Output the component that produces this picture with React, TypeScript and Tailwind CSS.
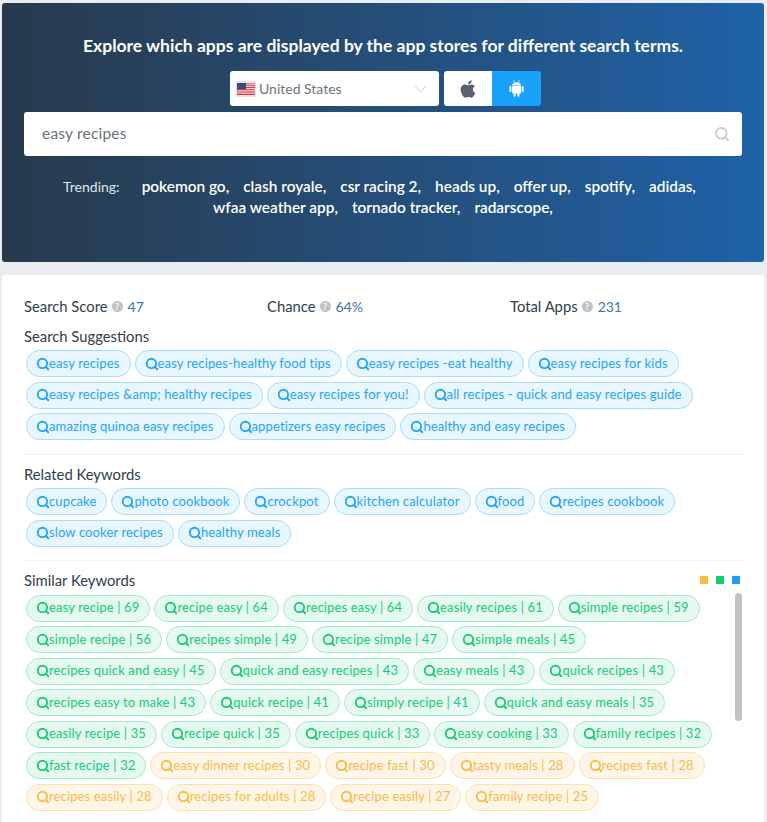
import { Search } from "lucide-react";
import { FaApple } from "react-icons/fa";

type Tone = "blue" | "green" | "orange";

const toneClass: Record<Tone, string> = {
  blue: "bg-[#e8f6ff] border-[#a6dcfd] text-[#1fa5fb]",
  green: "bg-[#e6f9f0] border-[#a3ebc6] text-[#14cd75]",
  orange: "bg-[#fff6e8] border-[#fde0ac] text-[#fdb94a]",
};

const suggestions = [
  "easy recipes",
  "easy recipes-healthy food tips",
  "easy recipes -eat healthy",
  "easy recipes for kids",
  "easy recipes &amp; healthy recipes",
  "easy recipes for you!",
  "all recipes - quick and easy recipes guide",
  "amazing quinoa easy recipes",
  "appetizers easy recipes",
  "healthy and easy recipes",
];

const related = [
  "cupcake",
  "photo cookbook",
  "crockpot",
  "kitchen calculator",
  "food",
  "recipes cookbook",
  "slow cooker recipes",
  "healthy meals",
];

const similar: [string, Tone][] = [
  ["easy recipe | 69", "green"],
  ["recipe easy | 64", "green"],
  ["recipes easy | 64", "green"],
  ["easily recipes | 61", "green"],
  ["simple recipes | 59", "green"],
  ["simple recipe | 56", "green"],
  ["recipes simple | 49", "green"],
  ["recipe simple | 47", "green"],
  ["simple meals | 45", "green"],
  ["recipes quick and easy | 45", "green"],
  ["quick and easy recipes | 43", "green"],
  ["easy meals | 43", "green"],
  ["quick recipes | 43", "green"],
  ["recipes easy to make | 43", "green"],
  ["quick recipe | 41", "green"],
  ["simply recipe | 41", "green"],
  ["quick and easy meals | 35", "green"],
  ["easily recipe | 35", "green"],
  ["recipe quick | 35", "green"],
  ["recipes quick | 33", "green"],
  ["easy cooking | 33", "green"],
  ["family recipes | 32", "green"],
  ["fast recipe | 32", "green"],
  ["easy dinner recipes | 30", "orange"],
  ["recipe fast | 30", "orange"],
  ["tasty meals | 28", "orange"],
  ["recipes fast | 28", "orange"],
  ["recipes easily | 28", "orange"],
  ["recipes for adults | 28", "orange"],
  ["recipe easily | 27", "orange"],
  ["family recipe | 25", "orange"],
];

const trending = [
  "pokemon go",
  "clash royale",
  "csr racing 2",
  "heads up",
  "offer up",
  "spotify",
  "adidas",
  "wfaa weather app",
  "tornado tracker",
  "radarscope",
];

function Flag() {
  return (
    <svg width="20" height="16" viewBox="0 0 20 16" className="shrink-0">
      <rect width="20" height="16" fill="#e4e4e8" />
      <rect x="1" y="2" width="18" height="12" fill="#fff" />
      <path d="M1 2.9h18M1 4.7h18M1 6.5h18M1 8.3h18M1 10.1h18M1 11.9h18M1 13.5h18" stroke="#d8343c" strokeWidth="1" />
      <rect x="1" y="2" width="9" height="6.5" fill="#3c4a7c" />
    </svg>
  );
}

function AndroidIcon() {
  return (
    <svg width="15" height="17" viewBox="0 0 15 17" fill="currentColor">
      <path d="M3 5.4C3.2 3.6 5.1 2.3 7.5 2.3s4.3 1.3 4.5 3.1z" />
      <path d="M4.6.4l1.1 2M10.4.4l-1.1 2" stroke="currentColor" strokeWidth="0.7" strokeLinecap="round" />
      <rect x="3" y="6" width="9" height="7.4" rx="1" />
      <rect x="0.4" y="6" width="2" height="6" rx="1" />
      <rect x="12.6" y="6" width="2" height="6" rx="1" />
      <rect x="4.6" y="12" width="2" height="4.8" rx="1" />
      <rect x="8.4" y="12" width="2" height="4.8" rx="1" />
    </svg>
  );
}

function Help() {
  return (
    <span className="inline-flex items-center justify-center w-[11px] h-[11px] rounded-full bg-[#bfc3c7] text-white text-[9px] font-bold leading-none">
      ?
    </span>
  );
}

function Chip({ label, tone = "blue" }: { label: string; tone?: Tone }) {
  return (
    <span className={`inline-flex items-center h-[27px] pl-[9px] pr-[10px] rounded-full border text-[13px] tracking-[0.13px] whitespace-nowrap ${toneClass[tone]}`}>
      <Search size={14} strokeWidth={3.2} className="shrink-0 -mr-[1px]" />
      {label}
    </span>
  );
}

function Stat({ label, value }: { label: string; value: string }) {
  return (
    <div className="w-[243px] shrink-0 flex items-center text-[14.8px]">
      <span className="text-[#2f3d4c]">{label}</span>
      <span className="ml-[4px] mr-[5px] flex"><Help /></span>
      <span className="text-[#3b78b0] text-[14px]">{value}</span>
    </div>
  );
}

export default function App() {
  return (
    <div
      className="h-[822px] overflow-hidden bg-[#e9ecf1] pt-[3px] px-[2px]"
      style={{ fontFamily: '"Lato", "Liberation Sans", sans-serif' }}
    >
      <div className="h-[259px] w-[762px] rounded-[3px] bg-gradient-to-r from-[#273a4c] to-[#1d62a8] px-[22px] pt-[33px] text-center">
        <h1 className="text-[17.5px] leading-[20px] font-bold text-white">
          Explore which apps are displayed by the app stores for different search terms.
        </h1>
        <div className="mt-[15px] pl-[5px] flex justify-center gap-[5px]">
          <div className="w-[209px] h-[35px] rounded-[3px] bg-white flex items-center pl-[6px] pr-[12px] text-[14px] text-[#6b7480]">
            <Flag />
            <span className="ml-[3px]">United States</span>
            <svg width="13" height="8" viewBox="0 0 13 8" className="ml-auto" fill="none" stroke="#c5cad0" strokeWidth="1">
              <path d="M1 1l5.5 6L12 1" />
            </svg>
          </div>
          <div className="flex h-[35px] rounded-[3px] overflow-hidden">
            <div className="w-[48px] bg-white flex items-center justify-center text-[#5a6470]">
              <FaApple size={20} />
            </div>
            <div className="w-[49px] bg-[#1aa1fb] flex items-center justify-center text-white">
              <AndroidIcon />
            </div>
          </div>
        </div>
        <div className="mt-[6px] h-[44px] rounded-[3px] bg-white flex items-center pl-[18px] pr-[12px] text-[15.5px] text-[#68727c]">
          <span className="tracking-[0.2px]">easy recipes</span>
          <Search size={16} strokeWidth={2.8} className="ml-auto text-[#c5cbd1]" />
        </div>
        <div className="mt-[20px] text-[15.4px] leading-[21px] text-white">
          <span className="text-[14px] text-[#dfe6ed] mr-[15px]">Trending:</span>
          {trending.map((t) => (
            <span key={t} className="mx-[7px] font-semibold inline-block">
              {t},
            </span>
          ))}
        </div>
      </div>

      <div className="mt-[13px] w-[762px] h-[560px] bg-white rounded-t-[3px] px-[22px] pt-[23px]">
        <div className="flex h-[17px]">
          <Stat label="Search Score" value="47" />
          <Stat label="Chance" value="64%" />
          <Stat label="Total Apps" value="231" />
        </div>

        <h2 className="mt-[13px] text-[14.8px] leading-[17px] text-[#2f3d4c]">Search Suggestions</h2>
        <div className="mt-[5px] pl-[2px] flex flex-wrap gap-x-[4px] gap-y-[4.5px]">
          {suggestions.map((s) => (
            <Chip key={s} label={s} />
          ))}
        </div>

        <div className="mt-[14px] border-t border-[#f0f1f3]" />
        <h2 className="mt-[11px] text-[14.8px] leading-[17px] text-[#2f3d4c]">Related Keywords</h2>
        <div className="mt-[5px] pl-[2px] flex flex-wrap gap-x-[4px] gap-y-[4.5px]">
          {related.map((s) => (
            <Chip key={s} label={s} />
          ))}
        </div>

        <div className="mt-[13px] border-t border-[#f0f1f3]" />
        <div className="relative">
          <div className="absolute right-[2px] top-[4px] flex gap-[8px]">
            <span className="w-[8px] h-[8px] bg-[#fdbd41]" />
            <span className="w-[8px] h-[8px] bg-[#0ccf6f]" />
            <span className="w-[8px] h-[8px] bg-[#1ea0fa]" />
          </div>
          <h2 className="mt-[11px] text-[14.8px] leading-[17px] text-[#2f3d4c]">Similar Keywords</h2>
          <div className="relative mt-[6px] pl-[2px] pr-[24px] flex flex-wrap gap-x-[4px] gap-y-[4.5px]">
            {similar.map(([label, tone]) => (
              <Chip key={label} label={label} tone={tone} />
            ))}
            <span className="absolute right-0 top-[-2px] w-[7px] h-[128px] rounded-full bg-[#c1c2c4]" />
          </div>
        </div>
      </div>
    </div>
  );
}
